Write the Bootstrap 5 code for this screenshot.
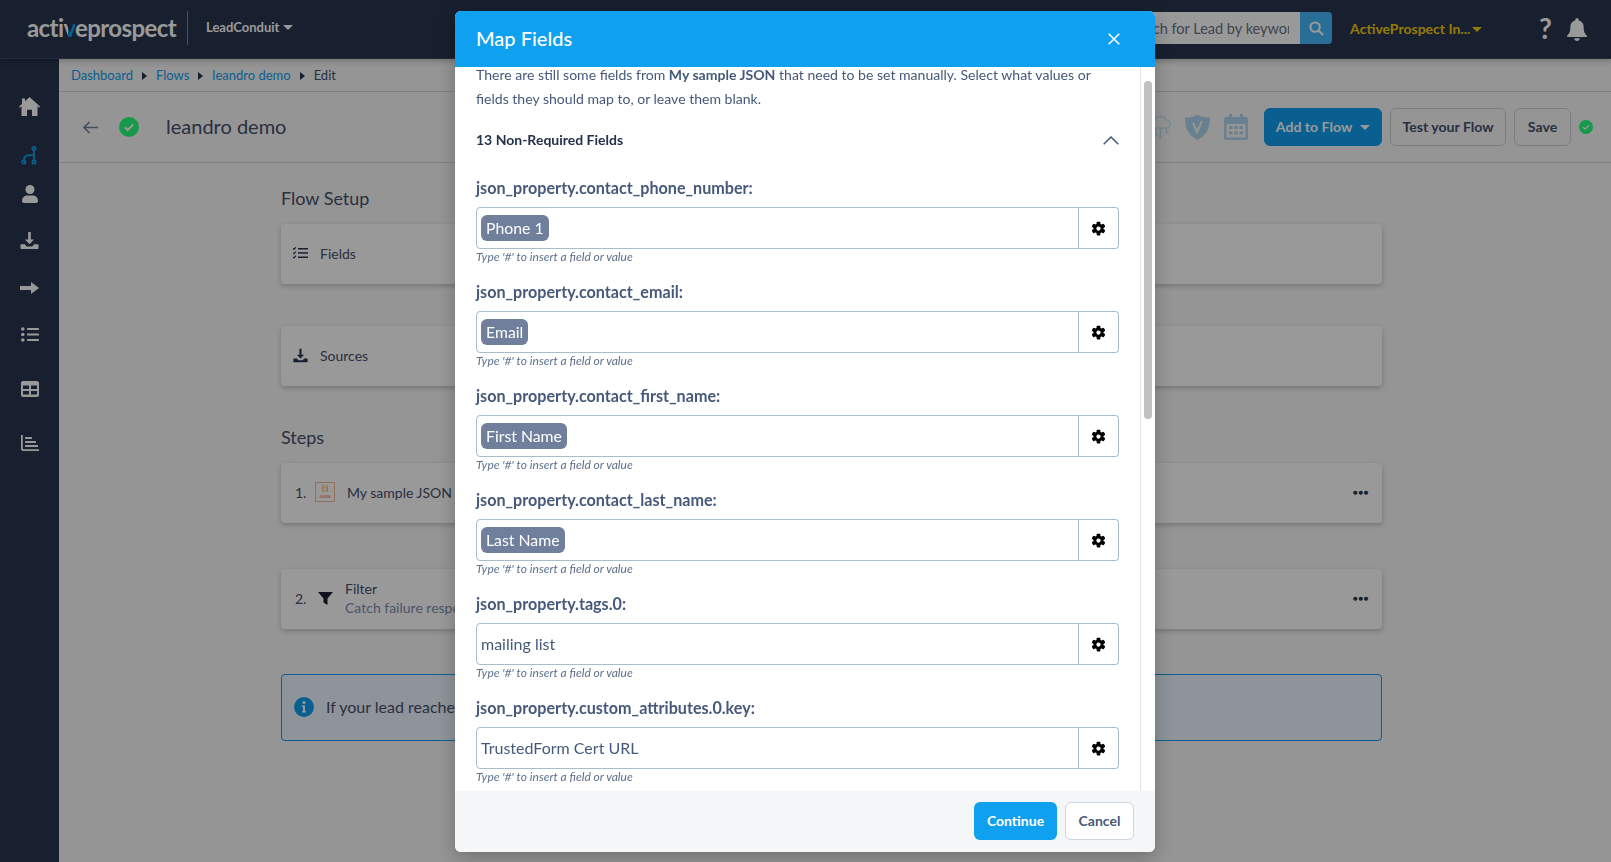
<!DOCTYPE html>
<html lang="en">
<head>
  <meta charset="UTF-8">
  <title>Map Fields - LeadConduit</title>
  <link href="https://cdn.jsdelivr.net/npm/bootstrap@5.3.3/dist/css/bootstrap.min.css" rel="stylesheet">
  <style>
    body { height: 100vh; overflow: hidden; background: #f8f8f8; font-family: "Lato", "Liberation Sans", sans-serif; color: #46506b; }
    .top-bar { height: 59px; background: #28344d; border-bottom: 1px solid #3d4860; box-shadow: 0 2px 6px rgba(0,0,0,.25); position: relative; z-index: 2; padding-left: 27px; padding-right: 24px; padding-bottom: 2px; }
    .brand-text { font-size: 24px; font-weight: 700; color: #fff; letter-spacing: -.6px; line-height: 1; width: 160px; }
    .brand-text span { background: linear-gradient(90deg, #fff 45%, #10a0f0 45%); -webkit-background-clip: text; background-clip: text; color: transparent; }
    .brand-sep { width: 1px; height: 34px; background: #7b8599; }
    .app-menu { font-size: 13px; font-weight: 700; color: #fff; margin-left: 18px; }
    .caret-down { display: inline-block; width: 0; height: 0; border-left: 5px solid transparent; border-right: 5px solid transparent; border-top: 5px solid currentColor; margin-left: 4px; vertical-align: 2px; }
    .search-box { width: 218px; height: 32px; }
    .search-box input { border: 0; height: 32px; min-height: 32px; font-size: 14.5px; padding: 0 11px; border-radius: 4px 0 0 4px; font-family: inherit; }
    .search-box input::placeholder { color: #697386; }
    .search-go { width: 32px; height: 32px; background: #43b8fa; border-radius: 0 4px 4px 0; }
    .org-menu { font-size: 14px; font-weight: 700; color: #f5cc10; margin-left: 18px; width: 131px; white-space: nowrap; }
    .org-menu .caret-down { margin-left: 2px; }
    .help-mark { font-size: 28px; font-weight: 700; color: #fff; line-height: 1; margin-left: 58px; }
    .bell-wrap { margin-left: 15px; }
    .page-row { height: calc(100vh - 59px); overflow: hidden; }
    .side-rail { width: 59px; background: #28344d; padding-top: 34px; }
    .rail-item { height: 22px; }
    .work-area { min-width: 0; }
    .crumb-bar { height: 33px; border-bottom: 1px solid #d5d5d5; padding-left: 12px; padding-top: 1px; font-size: 13px; color: #46506b; }
    .crumb-bar a { color: #10a0f0; text-decoration: none; }
    .crumb-arrow { width: 0; height: 0; border-top: 4px solid transparent; border-bottom: 4px solid transparent; border-left: 5px solid #28344d; margin: 0 9px; }
    .flow-head { height: 71px; border-bottom: 1px solid #d5d5d5; padding-left: 24px; padding-right: 18px; }
    .head-ok { margin-left: 21px; }
    .flow-title { font-size: 20px; color: #46506b; margin-left: 27px; padding-bottom: 2px; }
    .flow-tools { gap: 8px; }
    .tool-shield { margin-left: 5px; }
    .tool-cal { margin-left: 6px; margin-right: 8px; }
    .btn-flow { height: 38px; font-size: 14.1px; font-weight: 700; border-radius: 6px; padding: 0; color: #46506b; background: #f8f8f8; border: 1px solid #ccd3dd; white-space: nowrap; }
    .btn-add { background: #10a0f0; border-color: #10a0f0; color: #fff; width: 118px; }
    .btn-add .caret-down { margin-left: 8px; }
    .btn-test { width: 116px; }
    .btn-save { width: 57px; }
    .flow-body { padding-left: 222px; width: 1323px; }
    .sect-title { font-size: 18px; font-weight: 400; color: #46506b; margin: 0; line-height: 22px; }
    .setup-box { height: 60px; background: #fff; border: 0; border-radius: 4px; box-shadow: 0 2px 5px rgba(0,0,0,.22); padding-left: 12px; padding-right: 13px; padding-bottom: 2px; font-size: 14px; color: #46506b; white-space: nowrap; }
    .step-num { width: 20px; margin-left: 2px; flex-shrink: 0; }
    .step-dots { font-size: 8px; letter-spacing: .5px; color: #28344d; }
    .step-filter { margin-left: 3px; }
    .filter-text { line-height: 19px; }
    .box-sub { color: #7f8fae; }
    .note-box { height: 67px; background: #edf7ff; border: 1px solid #10a0f0; border-radius: 4px; padding-left: 12px; padding-bottom: 2px; font-size: 16px; color: #46506b; white-space: nowrap; }

    .modal-backdrop { --bs-backdrop-opacity: .4; }
    .map-modal { overflow: hidden; }
    .map-dialog { max-width: 700px; margin: 11px 0 0 455px; }
    .map-dialog .modal-content { height: 841px; border: 0; border-radius: 6px; box-shadow: 0 6px 20px rgba(0,0,0,.25); color: #46597a; overflow: hidden; }
    .map-head { height: 56px; background: #10a0f0; color: #fff; padding: 0 35px 0 21px; border: 0; border-radius: 0; }
    .map-head h5 { font-size: 20px; font-weight: 500; margin: 0 0 2px; }
    .map-body { overflow: hidden; position: relative; padding: 0 36px 0 21px; font-size: 14.05px; line-height: 24px; }
    .scroll-track { position: absolute; top: 0; right: 0; bottom: 0; width: 15px; background: #fff; border-left: 1px solid #e4e4e4; }
    .scroll-thumb { position: absolute; top: 14px; left: 3px; width: 8px; height: 338px; border-radius: 4px; background: #c1c1c1; }
    .intro-text { margin: -4px 0 0; }
    .req-row { margin-top: 17px; height: 24px; color: #25304a; font-weight: 700; font-size: 14px; }
    .field-gap { height: 23px; }
    .map-field { height: 104px; }
    .map-field label { display: block; font-size: 16.15px; font-weight: 700; line-height: 24px; padding-top: 1px; margin: 0 0 7px; color: #46597a; }
    .field-row { height: 42px; }
    .field-input { height: 42px; border: 1px solid #a9bbcf; border-radius: 4px 0 0 4px; padding: 0 4px; font-size: 16px; color: #46597a; }
    .field-gear { width: 40px; border: 1px solid #a9bbcf; border-left: 0; border-radius: 0 4px 4px 0; }
    .field-chip { height: 26px; background: #6f7f9c; color: #fff; border-radius: 6px; padding: 0 5px; font-size: 15.8px; line-height: 25px; }
    .field-hint { font-size: 12px; font-style: italic; line-height: 16px; color: #5d6f8c; }
    .map-foot { height: 61px; background: #f4f6f8; border: 0; padding: 0 21px 2px; gap: 8px; border-radius: 0; }
    .map-foot .btn { margin: 0; height: 38px; font-size: 14px; font-weight: 700; border-radius: 6px; }
    .btn-go { background: #10a0f0; color: #fff; border: 0; width: 83px; padding: 0; }
    .btn-stop { background: #fff; color: #46597a; border: 1px solid #cdd5df; width: 69px; padding: 0; }
  </style>
</head>
<body>
  <svg width="0" height="0" class="position-absolute">
    <symbol id="gear" viewBox="0 0 24 24">
      <g fill="#000">
        <rect x="9" y="1" width="6" height="22" rx="1.5"/>
        <rect x="9" y="1" width="6" height="22" rx="1.5" transform="rotate(60 12 12)"/>
        <rect x="9" y="1" width="6" height="22" rx="1.5" transform="rotate(120 12 12)"/>
        <circle cx="12" cy="12" r="8"/>
      </g>
      <circle cx="12" cy="12" r="3.4" fill="#fff"/>
    </symbol>
    <symbol id="okmark" viewBox="0 0 20 20">
      <circle cx="10" cy="10" r="10" fill="#25ff7a"/>
      <path d="M5.8 10.2l3 2.8 5.4-5.6" fill="none" stroke="#fff" stroke-width="2"/>
    </symbol>
    <symbol id="tray" viewBox="0 0 20 20">
      <path d="M8.6 1h2.8v8h3.4L10 14 5.200 9h3.400z"/>
      <path d="M1.500 14h3.600l2 2.300h5.800l2-2.300h3.600c.6 0 1 .5 1 1v3c0 .6-.4 1-1 1h-17c-.6 0-1-.4-1-1v-3c0-.5.4-1 1-1z"/>
    </symbol>
  </svg>

  <header class="top-bar d-flex align-items-center">
    <div class="brand-text">acti<span>v</span>eprospect</div>
    <div class="brand-sep"></div>
    <div class="app-menu">LeadConduit<span class="caret-down"></span></div>
    <div class="d-flex align-items-center ms-auto">
      <div class="search-box d-flex">
        <input class="form-control" type="text" placeholder="Search for Lead by keyword">
        <div class="search-go d-flex align-items-center justify-content-center flex-shrink-0">
          <svg width="15" height="15" viewBox="0 0 16 16" fill="none" stroke="#fff" stroke-width="2.200"><circle cx="6.500" cy="6.500" r="5"/><path d="M10.300 10.300L15 15"/></svg>
        </div>
      </div>
      <div class="org-menu">ActiveProspect In...<span class="caret-down"></span></div>
      <div class="help-mark">?</div>
      <div class="bell-wrap">
        <svg width="20" height="23" viewBox="0 0 21 24" fill="#fff"><path d="M10.500 0c1 0 1.700.8 1.700 1.800v.6c3.400.8 5.300 3.600 5.300 7 0 5.200 1.200 6.800 3.200 8.800.4.400.3 1.800-.7 1.800H1c-1 0-1.100-1.400-.7-1.800 2-2 3.200-3.600 3.200-8.800 0-3.400 1.900-6.200 5.300-7v-.6c0-1 .7-1.800 1.700-1.800z"/><path d="M7.500 21.200h6c0 1.500-1.300 2.800-3 2.800s-3-1.300-3-2.800z"/></svg>
      </div>
    </div>
  </header>

  <div class="page-row d-flex">
    <nav class="side-rail flex-shrink-0 d-flex flex-column align-items-center">
      <div class="rail-item">
        <svg width="21" height="19" viewBox="0 0 21 19" fill="#fff"><path d="M10.500 0L21 9.600l-.9 1.100-1.600-1.400V19h-5.500v-6.300H8V19H2.500V9.300L.9 10.700 0 9.600 3 6.900V1.500h3v2.700z"/></svg>
      </div>
      <div class="rail-item" style="margin-top:27px">
        <svg width="17" height="19" viewBox="0 0 17 19" fill="none" stroke="#10a0f0" stroke-width="1.800"><circle cx="13" cy="2.500" r="1.700"/><circle cx="2.800" cy="16" r="1.700"/><circle cx="13" cy="16" r="1.700"/><path d="M13 4.300v9.900M3 14.200C3 10 6 9.200 9 9.200h4"/></svg>
      </div>
      <div class="rail-item" style="margin-top:16px">
        <svg width="16" height="18" viewBox="0 0 16 18" fill="#fff"><circle cx="8" cy="4.500" r="4.500"/><path d="M0 16c0-3.500 2.500-5.600 5-5.600h6c2.500 0 5 2.100 5 5.600 0 1.200-.8 2-2 2H2c-1.200 0-2-.8-2-2z"/></svg>
      </div>
      <div class="rail-item" style="margin-top:25px">
        <svg width="19" height="19" fill="#fff"><use href="#tray"/></svg>
      </div>
      <div class="rail-item" style="margin-top:25px">
        <svg width="19" height="12" viewBox="0 0 19 12" fill="#fff"><path d="M0 4h11V0l8 6-8 6V8H0z"/></svg>
      </div>
      <div class="rail-item" style="margin-top:25px">
        <svg width="18" height="15" viewBox="0 0 18 15" fill="#fff"><circle cx="1.800" cy="2" r="1.800"/><circle cx="1.800" cy="7.500" r="1.800"/><circle cx="1.800" cy="13" r="1.800"/><rect x="6" y="1" width="12" height="2" rx=".6"/><rect x="6" y="6.500" width="12" height="2" rx=".6"/><rect x="6" y="12" width="12" height="2" rx=".6"/></svg>
      </div>
      <div class="rail-item" style="margin-top:32px">
        <svg width="18" height="16" viewBox="0 0 18 16" fill="#fff"><path fill-rule="evenodd" d="M2 0h14c1.100 0 2 .9 2 2v12c0 1.100-.9 2-2 2H2c-1.100 0-2-.9-2-2V2C0 .9.900 0 2 0zm0 4.500v3.500h6V4.500zm8 0v3.500h6V4.500zM2 10v3.500h6V10zm8 0v3.500h6V10z"/></svg>
      </div>
      <div class="rail-item" style="margin-top:32px">
        <svg width="18" height="16" viewBox="0 0 18 16" fill="#fff"><path d="M0 0h1.800v13.500c0 .4.300.7.700.7H18V16H2c-1.100 0-2-.9-2-2z"/><rect x="4" y="2" width="7" height="2" rx=".5"/><rect x="4" y="6" width="11" height="2" rx=".5"/><rect x="4" y="10" width="13" height="2" rx=".5"/></svg>
      </div>
    </nav>

    <main class="work-area flex-grow-1">
      <div class="crumb-bar d-flex align-items-center">
        <a href="#">Dashboard</a><span class="crumb-arrow"></span>
        <a href="#">Flows</a><span class="crumb-arrow"></span>
        <a href="#">leandro demo</a><span class="crumb-arrow"></span>
        <span>Edit</span>
      </div>
      <div class="flow-head d-flex align-items-center">
        <svg width="15" height="13" viewBox="0 0 15 13" fill="none" stroke="#6f7f9c" stroke-width="1.600"><path d="M15 6.500H1.200M6.500 1L1 6.500 6.500 12"/></svg>
        <svg class="head-ok" width="20" height="20"><use href="#okmark"/></svg>
        <div class="flow-title">leandro demo</div>
        <div class="flow-tools d-flex align-items-center ms-auto">
          <svg width="23" height="26" viewBox="0 0 24 26" fill="none" stroke="#c5e4f5" stroke-width="1.500"><path d="M5 14c-5 0-5-7 0-7 1-6 11-7 13-1 5 0 6 8 0 8z"/><path d="M7 14v5M12 14v9M18 14v5h3"/><circle cx="7" cy="21" r="1.500"/><circle cx="12" cy="24" r="1"/></svg>
          <svg class="tool-shield" width="25" height="25" viewBox="0 0 25 25" fill="#aed6ee"><path d="M12.500 0C17 2 21 2.500 25 2.500c0 9-2 17-12.500 22.500C2 19.500 0 11.500 0 2.500 4 2.500 8 2 12.500 0z"/><path d="M8 8l4 9 5-11" fill="none" stroke="#f8f8f8" stroke-width="2"/></svg>
          <svg class="tool-cal" width="24" height="26" viewBox="0 0 24 26" fill="#aed6ee"><path fill-rule="evenodd" d="M5 0h3v3h8V0h3v3h3c1.100 0 2 .9 2 2v19c0 1.100-.9 2-2 2H2c-1.100 0-2-.9-2-2V5c0-1.100.9-2 2-2h3zM2.500 10v13.500h19V10z"/><rect x="5" y="12" width="3.500" height="3"/><rect x="10.200" y="12" width="3.500" height="3"/><rect x="15.500" y="12" width="3.500" height="3"/><rect x="5" y="17.500" width="3.500" height="3"/><rect x="10.200" y="17.500" width="3.500" height="3"/><rect x="15.500" y="17.500" width="3.500" height="3"/></svg>
          <button class="btn btn-flow btn-add" type="button">Add to Flow<span class="caret-down"></span></button>
          <button class="btn btn-flow btn-test" type="button">Test your Flow</button>
          <button class="btn btn-flow btn-save" type="button">Save</button>
          <svg width="14" height="14"><use href="#okmark"/></svg>
        </div>
      </div>
      <div class="flow-body">
        <h2 class="sect-title" style="margin-top:24px">Flow Setup</h2>
        <div class="setup-box d-flex align-items-center" style="margin-top:15px">
          <svg width="15" height="12" viewBox="0 0 15 12" fill="#28344d"><path d="M0 1.500l1 .9L3 .2M0 5.800l1 .9 2-2.200M0 10l1 .9 2-2.200" fill="none" stroke="#28344d" stroke-width="1.100"/><rect x="5" y="1" width="10" height="1.500"/><rect x="5" y="5.200" width="10" height="1.500"/><rect x="5" y="9.500" width="10" height="1.500"/></svg>
          <span class="ms-2 ps-1">Fields</span>
        </div>
        <div class="setup-box d-flex align-items-center" style="margin-top:42px">
          <svg width="15" height="15" fill="#28344d"><use href="#tray"/></svg>
          <span class="ms-2 ps-1">Sources</span>
        </div>
        <h2 class="sect-title" style="margin-top:40px">Steps</h2>
        <div class="setup-box d-flex align-items-center" style="margin-top:15px">
          <span class="step-num">1.</span>
          <svg width="20" height="20" viewBox="0 0 20 20" fill="none" stroke="#f7a67c" stroke-width=".8"><rect x=".5" y=".5" width="19" height="19"/><text x="10" y="9" font-size="7" font-weight="700" fill="#f58a55" stroke="none" text-anchor="middle">{:}</text><text x="10" y="16" font-size="4.500" font-weight="700" fill="#f58a55" stroke="none" text-anchor="middle">JSON</text></svg>
          <span class="ms-2 ps-1">My sample JSON</span>
          <span class="ms-auto fw-bold step-dots">&#9679;&#9679;&#9679;</span>
        </div>
        <div class="setup-box d-flex align-items-center" style="margin-top:46px">
          <span class="step-num">2.</span>
          <svg class="step-filter" width="15" height="13" viewBox="0 0 15 13" fill="#1a2230"><path d="M0 0h15L9.500 6.500V13l-4-2.500v-4z"/></svg>
          <div class="ms-2 ps-1 filter-text">
            <div>Filter</div>
            <div class="box-sub">Catch failure responses</div>
          </div>
          <span class="ms-auto fw-bold step-dots">&#9679;&#9679;&#9679;</span>
        </div>
        <div class="note-box d-flex align-items-center" style="margin-top:45px">
          <svg width="20" height="20" viewBox="0 0 20 20"><circle cx="10" cy="10" r="10" fill="#10a0f0"/><circle cx="10" cy="5.500" r="1.500" fill="#fff"/><path d="M8 8.500h3V14h1v1.500H8V14h1v-4H8z" fill="#fff"/></svg>
          <span class="ms-2 ps-1">If your lead reaches</span>
        </div>
      </div>
    </main>
  </div>

  <div class="modal-backdrop show"></div>

  <div class="modal d-block map-modal" tabindex="-1">
    <div class="modal-dialog map-dialog">
      <div class="modal-content">
        <div class="modal-header map-head">
          <h5>Map Fields</h5>
          <svg class="ms-auto" width="12" height="12" viewBox="0 0 12 12" fill="none" stroke="#fff" stroke-width="1.500"><path d="M.7.7l10.600 10.600M11.300.7L.7 11.300"/></svg>
        </div>
        <div class="modal-body map-body">
          <p class="intro-text">There are still some fields from <b>My sample JSON</b> that need to be set manually. Select what values or fields they should map to, or leave them blank.</p>
          <div class="req-row d-flex align-items-center justify-content-between">
            <span>13 Non-Required Fields</span>
            <svg width="16" height="9" viewBox="0 0 16 9" fill="none" stroke="#46597a" stroke-width="1.500"><path d="M.7 8.300L8 1l7.300 7.300"/></svg>
          </div>
          <div class="field-gap"></div>
          <div class="map-field">
            <label>json_property.contact_phone_number:</label>
            <div class="field-row d-flex">
              <div class="field-input flex-grow-1 d-flex align-items-center"><span class="field-chip">Phone 1</span></div>
              <div class="field-gear d-flex align-items-center justify-content-center"><svg width="15" height="15"><use href="#gear"/></svg></div>
            </div>
            <div class="field-hint">Type '#' to insert a field or value</div>
          </div>
          <div class="map-field">
            <label>json_property.contact_email:</label>
            <div class="field-row d-flex">
              <div class="field-input flex-grow-1 d-flex align-items-center"><span class="field-chip">Email</span></div>
              <div class="field-gear d-flex align-items-center justify-content-center"><svg width="15" height="15"><use href="#gear"/></svg></div>
            </div>
            <div class="field-hint">Type '#' to insert a field or value</div>
          </div>
          <div class="map-field">
            <label>json_property.contact_first_name:</label>
            <div class="field-row d-flex">
              <div class="field-input flex-grow-1 d-flex align-items-center"><span class="field-chip">First Name</span></div>
              <div class="field-gear d-flex align-items-center justify-content-center"><svg width="15" height="15"><use href="#gear"/></svg></div>
            </div>
            <div class="field-hint">Type '#' to insert a field or value</div>
          </div>
          <div class="map-field">
            <label>json_property.contact_last_name:</label>
            <div class="field-row d-flex">
              <div class="field-input flex-grow-1 d-flex align-items-center"><span class="field-chip">Last Name</span></div>
              <div class="field-gear d-flex align-items-center justify-content-center"><svg width="15" height="15"><use href="#gear"/></svg></div>
            </div>
            <div class="field-hint">Type '#' to insert a field or value</div>
          </div>
          <div class="map-field">
            <label>json_property.tags.0:</label>
            <div class="field-row d-flex">
              <div class="field-input flex-grow-1 d-flex align-items-center">mailing list</div>
              <div class="field-gear d-flex align-items-center justify-content-center"><svg width="15" height="15"><use href="#gear"/></svg></div>
            </div>
            <div class="field-hint">Type '#' to insert a field or value</div>
          </div>
          <div class="map-field">
            <label>json_property.custom_attributes.0.key:</label>
            <div class="field-row d-flex">
              <div class="field-input flex-grow-1 d-flex align-items-center">TrustedForm Cert URL</div>
              <div class="field-gear d-flex align-items-center justify-content-center"><svg width="15" height="15"><use href="#gear"/></svg></div>
            </div>
            <div class="field-hint">Type '#' to insert a field or value</div>
          </div>
          <div class="scroll-track"><div class="scroll-thumb"></div></div>
        </div>
        <div class="modal-footer map-foot">
          <button class="btn btn-go" type="button">Continue</button>
          <button class="btn btn-stop" type="button">Cancel</button>
        </div>
      </div>
    </div>
  </div>

  <script src="https://cdn.jsdelivr.net/npm/bootstrap@5.3.3/dist/js/bootstrap.bundle.min.js"></script>
</body>
</html>
